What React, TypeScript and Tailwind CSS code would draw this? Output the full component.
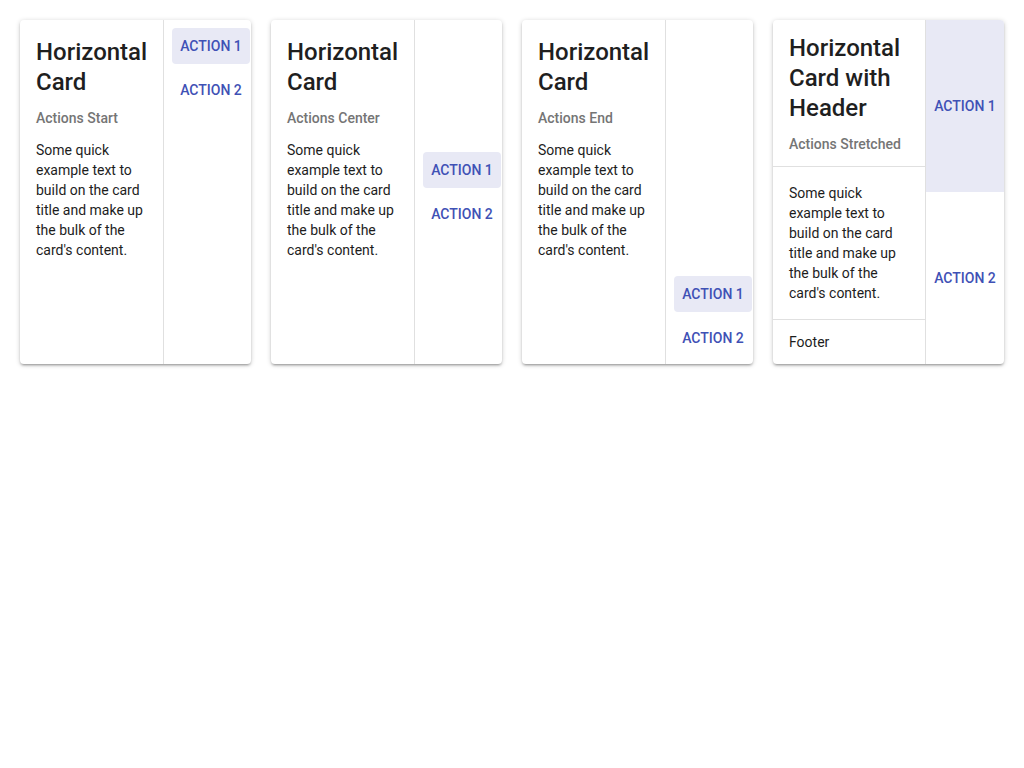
import React from "react";

const font = { fontFamily: "Roboto, 'Noto Sans', Arial, sans-serif" };

function Body() {
  return (
    <div className="text-[14px] leading-[20px] text-[#1d1d1d]">
      Some quick example text to build on the card title and make up the bulk of the card's content.
    </div>
  );
}

function Btn({ label, active }: { label: string; active?: boolean }) {
  return (
    <div
      className={
        "h-9 w-[78px] flex items-center justify-center rounded text-[14px] font-medium uppercase text-[#3f51b5] " +
        (active ? "bg-[#e8e9f5]" : "")
      }
    >
      {label}
    </div>
  );
}

function SimpleCard({ subtitle, justify }: { subtitle: string; justify: string }) {
  return (
    <div className="flex bg-white rounded overflow-hidden shadow-[0_1px_5px_rgba(0,0,0,0.2),0_2px_2px_rgba(0,0,0,0.14),0_3px_1px_-2px_rgba(0,0,0,0.12)]">
      <div className="w-[143px] shrink-0 px-4 pt-[17px] pb-4">
        <div className="text-[24px] leading-[30px] font-medium text-[#1f1f1f]">Horizontal Card</div>
        <div className="mt-[11px] text-[14px] leading-[20px] font-medium text-[#757575]">{subtitle}</div>
        <div className="mt-3">
          <Body />
        </div>
      </div>
      <div className="w-px bg-[#e0e0e0] shrink-0" />
      <div className={"flex-1 flex flex-col items-start gap-2 pl-2 py-2 " + justify}>
        <Btn label="Action 1" active />
        <Btn label="Action 2" />
      </div>
    </div>
  );
}

function HeaderCard() {
  return (
    <div className="flex bg-white rounded overflow-hidden shadow-[0_1px_5px_rgba(0,0,0,0.2),0_2px_2px_rgba(0,0,0,0.14),0_3px_1px_-2px_rgba(0,0,0,0.12)]">
      <div className="w-[152px] shrink-0 flex flex-col">
        <div className="px-4 pt-[13px] pb-3">
          <div className="text-[24px] leading-[30px] font-medium text-[#1f1f1f]">Horizontal Card with Header</div>
          <div className="mt-[11px] text-[14px] leading-[20px] font-medium text-[#757575]">Actions Stretched</div>
        </div>
        <div className="h-px bg-[#e0e0e0]" />
        <div className="p-4 flex-1">
          <Body />
        </div>
        <div className="h-px bg-[#e0e0e0]" />
        <div className="px-4 py-3 text-[14px] leading-[20px] text-[#1d1d1d]">Footer</div>
      </div>
      <div className="w-px bg-[#e0e0e0] shrink-0" />
      <div className="flex-1 flex flex-col">
        <div className="flex-1 flex items-center justify-center bg-[#e8e9f5] text-[14px] font-medium uppercase text-[#3f51b5]">
          Action 1
        </div>
        <div className="flex-1 flex items-center justify-center text-[14px] font-medium uppercase text-[#3f51b5]">
          Action 2
        </div>
      </div>
    </div>
  );
}

export default function App() {
  return (
    <div style={font} className="w-[1024px] h-[768px] bg-white">
      <div className="grid grid-cols-4 gap-5 p-5 items-stretch">
        <SimpleCard subtitle="Actions Start" justify="justify-start" />
        <SimpleCard subtitle="Actions Center" justify="justify-center" />
        <SimpleCard subtitle="Actions End" justify="justify-end" />
        <HeaderCard />
      </div>
    </div>
  );
}
